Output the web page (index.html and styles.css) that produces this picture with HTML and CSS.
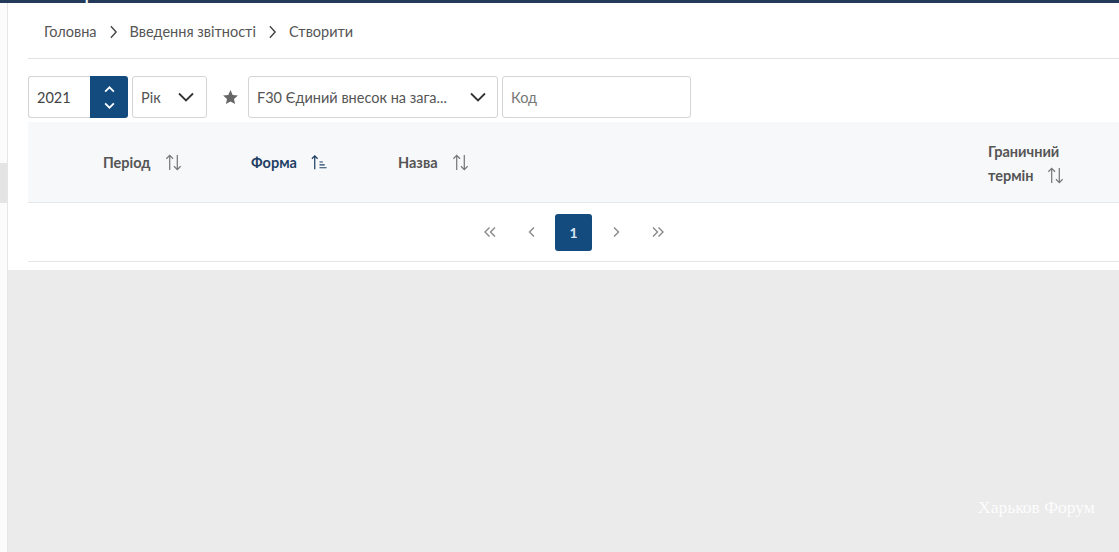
FILE: index.html
```html
<!DOCTYPE html>
<html lang="uk">
<head>
<meta charset="utf-8">
<title>Створити</title>
<link rel="stylesheet" href="styles.css">
</head>
<body>
<div class="topbar"><span class="topbar-text">Права шапки</span></div>
<div class="layout">
  <aside class="side"><div class="side-block"></div></aside>
  <main class="main">
    <section class="panel">
      <nav class="crumbs">
        <span>Головна</span>
        <svg class="crumb-sep" viewBox="0 0 10 16" width="9" height="14"><path d="M2 1.5 L8 8 L2 14.5" fill="none" stroke="#444" stroke-width="1.6"/></svg>
        <span>Введення звітності</span>
        <svg class="crumb-sep" viewBox="0 0 10 16" width="9" height="14"><path d="M2 1.5 L8 8 L2 14.5" fill="none" stroke="#444" stroke-width="1.6"/></svg>
        <span>Створити</span>
      </nav>
      <div class="controls">
        <div class="year">
          <div class="year-input">2021</div>
          <div class="spin">
            <svg viewBox="0 0 12 8" width="11" height="7"><path d="M1 6.5 L6 1.5 L11 6.5" fill="none" stroke="#fff" stroke-width="2"/></svg>
            <svg viewBox="0 0 12 8" width="11" height="7"><path d="M1 1.5 L6 6.5 L11 1.5" fill="none" stroke="#fff" stroke-width="2"/></svg>
          </div>
        </div>
        <div class="select sel-period">
          <span>Рік</span>
          <svg viewBox="0 0 16 10" width="16" height="10"><path d="M1 1.5 L8 8.5 L15 1.5" fill="none" stroke="#333" stroke-width="1.8"/></svg>
        </div>
        <svg class="star" viewBox="0 0 24 24" width="17" height="17"><path d="M12 1.5 L15.1 8.3 L22.5 9 L16.9 14 L18.5 21.3 L12 17.5 L5.5 21.3 L7.1 14 L1.5 9 L8.9 8.3 Z" fill="#666"/></svg>
        <div class="select sel-form">
          <span>F30 Єдиний внесок на зага...</span>
          <svg viewBox="0 0 16 10" width="16" height="10"><path d="M1 1.5 L8 8.5 L15 1.5" fill="none" stroke="#333" stroke-width="1.8"/></svg>
        </div>
        <div class="select sel-code"><span class="placeholder">Код</span></div>
      </div>
      <div class="thead">
        <div class="th th-check"></div>
        <div class="th th-period">Період
          <svg class="sort" viewBox="0 0 20 20" width="19" height="19"><path d="M6 18 V2.5 M2.5 6 L6 2.5 L9.5 6 M14 2 V17.5 M10.5 14 L14 17.5 L17.5 14" fill="none" stroke="#777" stroke-width="1.3"/></svg>
        </div>
        <div class="th th-form active">Форма
          <svg class="sort" viewBox="0 0 20 20" width="19" height="19"><path d="M5 17 V3 M2 6 L5 3 L8 6" fill="none" stroke="#1f3f63" stroke-width="1.3"/><path d="M10 9.5 H13.5 M10 12.5 H15.5 M10 15.5 H17.5" fill="none" stroke="#1f3f63" stroke-width="1.2"/></svg>
        </div>
        <div class="th th-name">Назва
          <svg class="sort" viewBox="0 0 20 20" width="19" height="19"><path d="M6 18 V2.5 M2.5 6 L6 2.5 L9.5 6 M14 2 V17.5 M10.5 14 L14 17.5 L17.5 14" fill="none" stroke="#777" stroke-width="1.3"/></svg>
        </div>
        <div class="th th-term">
          <div>Граничний</div>
          <div class="term-line">термін
            <svg class="sort" viewBox="0 0 20 20" width="19" height="19"><path d="M6 18 V2.5 M2.5 6 L6 2.5 L9.5 6 M14 2 V17.5 M10.5 14 L14 17.5 L17.5 14" fill="none" stroke="#777" stroke-width="1.3"/></svg>
          </div>
        </div>
      </div>
      <div class="pager">
        <span class="pg"><svg viewBox="0 0 14 12" width="14" height="12"><path d="M6.5 1.5 L2 6 L6.5 10.5 M12 1.5 L7.5 6 L12 10.5" fill="none" stroke="#888" stroke-width="1.4"/></svg></span>
        <span class="pg"><svg viewBox="0 0 8 12" width="8" height="12"><path d="M6 1.5 L1.5 6 L6 10.5" fill="none" stroke="#888" stroke-width="1.4"/></svg></span>
        <span class="pg current">1</span>
        <span class="pg"><svg viewBox="0 0 8 12" width="8" height="12"><path d="M2 1.5 L6.5 6 L2 10.5" fill="none" stroke="#888" stroke-width="1.4"/></svg></span>
        <span class="pg"><svg viewBox="0 0 14 12" width="14" height="12"><path d="M2 1.5 L6.5 6 L2 10.5 M7.5 1.5 L12 6 L7.5 10.5" fill="none" stroke="#888" stroke-width="1.4"/></svg></span>
      </div>
    </section>
    <div class="backdrop"></div>
  </main>
</div>
<div class="watermark">Харьков Форум</div>
</body>
</html>
```

FILE: styles.css
```css
* { box-sizing: border-box; }
html, body { margin: 0; padding: 0; height: 100%; }
body {
  font-family: Lato, "Open Sans", "DejaVu Sans", sans-serif;
  color: #333;
  background: #ebebec;
  overflow: hidden;
  display: flex;
  flex-direction: column;
}
.topbar {
  height: 3px;
  background: #243a5a;
  overflow: hidden;
  flex: none;
  padding-left: 72px;
}
.topbar-text {
  display: block;
  margin-top: -14px;
  color: #fff;
  font-weight: 700;
  font-size: 16px;
  line-height: 16px;
  letter-spacing: 1px;
}
.layout { flex: 1; display: flex; min-height: 0; }
.side {
  width: 8px;
  flex: none;
  background: #fbfbfb;
  border-right: 1px solid #e6e6e6;
  padding-top: 160px;
}
.side-block { height: 40px; background: #e4e4e4; }
.main { flex: 1; display: flex; flex-direction: column; min-width: 0; }
.panel {
  background: #fff;
  padding: 0 0 8px 20px;
  flex: none;
}
.crumbs {
  height: 56px;
  border-bottom: 1px solid #e3e3e3;
  display: flex;
  align-items: center;
  padding-left: 16px;
  font-size: 14.5px;
  color: #555;
  padding-top: 2px;
}
.crumb-sep { margin: 0 12px 0 12px; }
.controls {
  display: flex;
  align-items: center;
  margin-top: 17px;
  height: 42px;
  gap: 4px;
}
.year { display: flex; height: 42px; }
.year-input {
  width: 62px;
  border: 1px solid #d4d4d4;
  border-right: none;
  border-radius: 3px 0 0 3px;
  display: flex;
  align-items: center;
  padding-left: 8px;
  font-size: 14.5px;
  color: #444;
}
.spin {
  width: 38px;
  background: #134b7e;
  border-radius: 0 3px 3px 0;
  display: flex;
  flex-direction: column;
  align-items: center;
  justify-content: center;
  gap: 9px;
}
.select {
  height: 42px;
  border: 1px solid #d4d4d4;
  border-radius: 3px;
  display: flex;
  align-items: center;
  justify-content: space-between;
  padding: 0 12px 0 8px;
  font-size: 14.5px;
  color: #555;
}
.sel-period { width: 75px; }
.star { margin: 0 5px 0 11px; }
.sel-form { width: 250px; padding-right: 11px; }
.sel-code { width: 189px; }
.placeholder { color: #777; }
.thead {
  margin-top: 4px;
  height: 81px;
  background: #f7f8fa;
  border-bottom: 1px solid #e6e7e9;
  display: flex;
  align-items: center;
  font-weight: 700;
  font-size: 14.5px;
  color: #555;
}
.th { display: flex; align-items: center; }
.th-check { width: 75px; }
.th-period { width: 148px; }
.th-form { width: 147px; }
.th-name { width: 590px; }
.th-term { flex-direction: column; align-items: flex-start; gap: 6px; padding-top: 3px; }
.term-line { display: flex; align-items: center; }
.th.active { color: #1f3f63; }
.sort { margin-left: 13px; }
.th-form .sort { margin-left: 13px; }
.term-line .sort { margin-left: 12px; }
.pager {
  height: 59px;
  border-bottom: 1px solid #e6e6e6;
  display: flex;
  align-items: center;
  justify-content: center;
  gap: 5px;
}
.pg {
  width: 37px;
  height: 37px;
  display: flex;
  align-items: center;
  justify-content: center;
  border-radius: 3px;
  font-size: 14px;
}
.pg.current {
  background: #134b7e;
  color: #d8e6f3;
  font-weight: 700;
}
.backdrop { flex: 1; background: #ebebec; }
.watermark {
  position: absolute;
  left: 978px;
  top: 497px;
  font-family: "Liberation Serif", "DejaVu Serif", serif;
  font-size: 17.5px;
  color: #fff;
  opacity: 0.9;
}
```
